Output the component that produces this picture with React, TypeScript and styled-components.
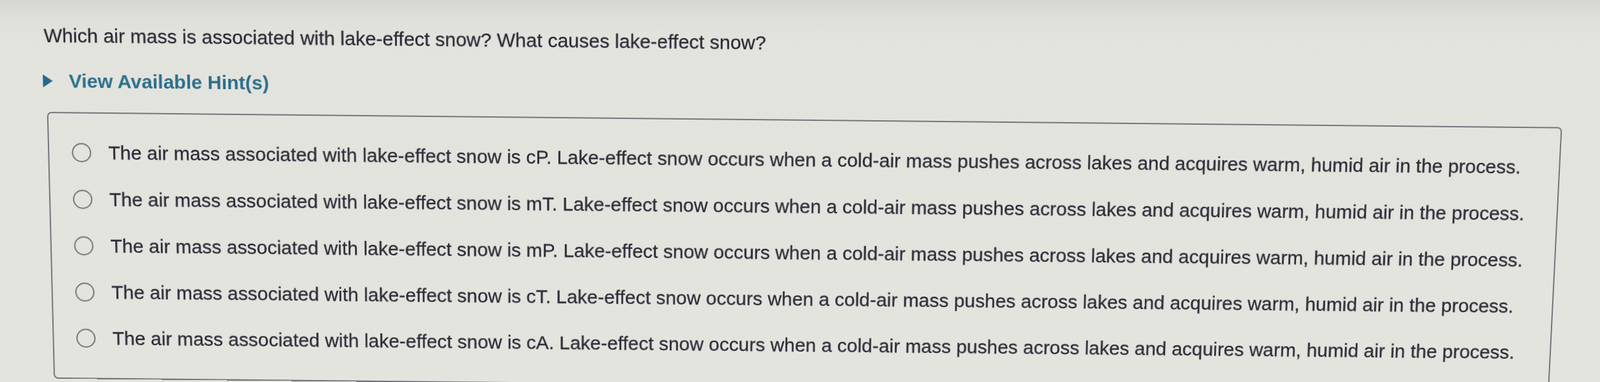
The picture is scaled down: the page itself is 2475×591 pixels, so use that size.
import React from "react";
import styled, { createGlobalStyle } from "styled-components";

const GlobalStyle = createGlobalStyle`
  html, body {
    margin: 0;
    padding: 0;
    width: 2475px;
    height: 591px;
    overflow: hidden;
  }
  body {
    font-family: "Liberation Sans", Arial, Helvetica, sans-serif;
    background:
      linear-gradient(180deg, #d6d6d2 0px, #dfdfdb 30px, #e3e3de 60px, #e4e4df 100%);
  }
`;

// the reference is a photo of a monitor, so the page sits slightly tilted
const Page = styled.div`
  box-sizing: border-box;
  width: 2475px;
  height: 591px;
  padding: 36.6px 0 0 68px;
  transform-origin: 1180px 173px;
  transform: translateY(11.2px) perspective(3000px) rotateX(-5.5deg) rotate(0.58deg);
`;

const Question = styled.p`
  margin: 0;
  padding-left: 3px;
  font-size: 30px;
  line-height: 36px;
  color: #2a2934;
  -webkit-text-stroke: 0.3px #2a2934;
  white-space: nowrap;
`;

const HintToggle = styled.div`
  display: flex;
  align-items: center;
  gap: 25px;
  margin-top: 34px;
  height: 36px;
  cursor: pointer;
`;

const Caret = styled.span`
  width: 0;
  height: 0;
  border-left: 15px solid #23698a;
  border-top: 10px solid transparent;
  border-bottom: 10px solid transparent;
`;

const HintLabel = styled.span`
  font-size: 30px;
  line-height: 36px;
  font-weight: 700;
  color: #2b6f8c;
`;

const AnswerBox = styled.div`
  box-sizing: border-box;
  margin: 30.4px 0 0 5px;
  width: 2344px;
  height: 420px;
  padding: 25px 0 0 34.5px;
  border: 2px solid #74747a;
  border-radius: 7px;
`;

const Option = styled.label`
  display: flex;
  align-items: center;
  gap: 27px;
  height: 73px;
`;

const Radio = styled.input`
  appearance: none;
  margin: 0;
  flex-shrink: 0;
  box-sizing: border-box;
  width: 30px;
  height: 30px;
  border: 2px solid #727279;
  border-radius: 50%;
  background: transparent;
`;

const OptionText = styled.span`
  font-size: 29.9px;
  line-height: 36px;
  color: #2c2b36;
  -webkit-text-stroke: 0.3px #2c2b36;
  white-space: nowrap;
`;

const tail =
  "Lake-effect snow occurs when a cold-air mass pushes across lakes and acquires warm, humid air in the process.";

const airMasses = ["cP", "mT", "mP", "cT", "cA"];

export default function App() {
  return (
    <>
      <GlobalStyle />
      <Page>
        <Question>
          Which air mass is associated with lake-effect snow? What causes lake-effect snow?
        </Question>
        <HintToggle>
          <Caret />
          <HintLabel>View Available Hint(s)</HintLabel>
        </HintToggle>
        <AnswerBox>
          {airMasses.map((m) => (
            <Option key={m}>
              <Radio type="radio" name="airmass" />
              <OptionText>
                The air mass associated with lake-effect snow is {m}. {tail}
              </OptionText>
            </Option>
          ))}
        </AnswerBox>
      </Page>
    </>
  );
}
